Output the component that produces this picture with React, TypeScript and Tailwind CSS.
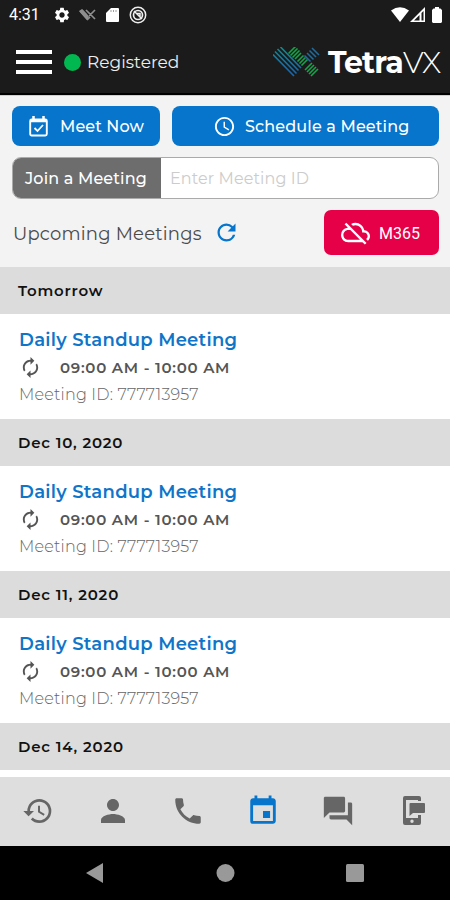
import {
  MdAutorenew,
  MdEvent,
  MdHistory,
  MdOutlineCloudOff,
  MdPerson,
  MdPhone,
  MdQuestionAnswer,
  MdRefresh,
  MdSchedule,
  MdSettings,
} from "react-icons/md";

const MEETING_DAYS = ["Tomorrow", "Dec 10, 2020", "Dec 11, 2020"];

function StatusBar() {
  return (
    <div className="flex h-[29px] items-center pl-[9px] pr-[8px] text-white">
      <span className="w-[44px] font-[Roboto] text-[16px] leading-none">4:31</span>
      <MdSettings className="size-[18px]" />
      <svg className="ml-[8px] h-[13px] w-[18px]" viewBox="0 0 18 13">
        <g fill="none" stroke="#8f8f8f" strokeWidth="1.700">
          <path d="M1 3l7 8M3 2l6 7M8 12l3-3M7 2l9 9M10 8l6-6" />
        </g>
        <path d="M0 3l3-2 5 5 2 3-2 3z" fill="#8f8f8f" />
      </svg>
      <svg className="ml-[9px] h-[16px] w-[13px]" viewBox="0 0 13 16">
        <path d="M5 1h7a1 1 0 0 1 1 1v12a1 1 0 0 1-1 1H1a1 1 0 0 1-1-1V6z" fill="white" />
        <path d="M5 3v2M7.500 3v2M10 3v2" stroke="#777" strokeWidth="0.700" />
      </svg>
      <svg className="ml-[10px] size-[18px]" viewBox="0 0 18 18" fill="none" stroke="#eee">
        <circle cx="9" cy="9" r="7.700" strokeWidth="1.500" />
        <circle cx="9" cy="9" r="4.500" strokeWidth="1.700" />
        <path d="M5 5l8 8M8 7.500h3v3" strokeWidth="1.500" />
      </svg>
      <svg className="ml-auto h-[15px] w-[18px]" viewBox="0 0 18 15">
        <path d="M0 3.500Q9-3 18 3.500L9 15z" fill="white" />
      </svg>
      <svg className="ml-px h-[15px] w-[15px]" viewBox="0 0 15 15">
        <path d="M0 15L15 0v15z" fill="white" />
        <path d="M4 13.500L9.500 8v5.500zM11.500 6l2-2v9.500h-2z" fill="#1b1b1b" />
      </svg>
      <svg className="ml-[7px] h-[16px] w-[10px]" viewBox="0 0 10 16">
        <path d="M3 0h4v1.500h1.500L10 3v12l-1 1H1l-1-1V3l1.500-1.500H3z" fill="white" />
      </svg>
    </div>
  );
}

function Logo() {
  return (
    <svg className="h-[31px] w-[47px]" viewBox="0 0 47 31" fill="none" strokeWidth="1.600">
      <defs>
        <linearGradient id="stripe" x1="16" y1="0" x2="12" y2="26" gradientUnits="userSpaceOnUse">
          <stop stopColor="#168a86" />
          <stop offset="1" stopColor="#1767b5" />
        </linearGradient>
      </defs>
      <path d="M0 7.500l21 21.500M2 4.500l21.500 22M4.500 2l21 21.500M7.500 0l20.500 21" stroke="url(#stripe)" />
      <path
        d="M15.500 6.500l7-7M17.500 8.500l7-7M19.500 10.500l7-7M22 12l6-6M24.500 14.500l6-6M26.500 16.500l6-6M28.500 18.500l6-6M32 23l7-7M34 25l7-7M36 27l7-7M38 29l7-7"
        stroke="#17a34a"
      />
      <path d="M39 1l7 7M36.500 3.500l6.500 6.500M34 6l6.500 6.500M31.500 8.500l6 6" stroke="#1f6b9c" />
    </svg>
  );
}

function Header() {
  return (
    <header className="h-[95px] border-b-2 border-black bg-[#1b1b1b] text-white">
      <StatusBar />
      <div className="flex h-[66px] items-center pl-[16px] pr-[8px]">
        <div className="flex w-[36px] flex-col gap-[6px]">
          <span className="h-[4px] bg-white" />
          <span className="h-[4px] bg-white" />
          <span className="h-[4px] bg-white" />
        </div>
        <span className="ml-[12px] size-[17px] rounded-full bg-[#00b84f]" />
        <span className="ml-[6px] mt-px text-[17px] text-[#eee]">Registered</span>
        <div className="ml-auto flex items-center gap-[8px] whitespace-nowrap">
          <Logo />
          <div className="w-[114px] pt-[2px] text-[30px] leading-none tracking-[-0.85px]">
            <span className="font-bold">Tetra</span>
            <span className="font-light">VX</span>
          </div>
        </div>
      </div>
    </header>
  );
}

function CalendarCheck() {
  return (
    <svg className="h-[21px] w-[19px]" viewBox="0 0 19 21" fill="none" stroke="white">
      <rect x="1.200" y="3.500" width="16.600" height="16" rx="1.500" strokeWidth="1.900" />
      <path d="M1 5h17M4.500 0v4M14.500 0v4" strokeWidth="2.500" />
      <path d="M5.500 12l3 3 5.500-6" strokeWidth="1.800" />
    </svg>
  );
}

function Controls() {
  return (
    <section className="h-[172px] border-t border-[#cfcfcf] bg-[#f3f3f3] pl-[12px] pr-[11px] pt-[10px]">
      <div className="flex h-[40px] gap-[12px] font-medium text-white">
        <button className="flex w-[148px] items-center rounded-[8px] bg-[#0675cb] pl-[17px]">
          <CalendarCheck />
          <span className="ml-[12px] mt-[2px] whitespace-nowrap text-[16px] tracking-[0.1px]">Meet Now</span>
        </button>
        <button className="flex w-[267px] items-center rounded-[8px] bg-[#0675cb] pl-[41px]">
          <MdSchedule className="size-[23px]" />
          <span className="ml-[9px] mt-[2px] whitespace-nowrap text-[16px] tracking-[0.15px]">
            Schedule a Meeting
          </span>
        </button>
      </div>
      <div className="mt-[11px] flex h-[42px] overflow-hidden rounded-[9px] border border-[#aaa] bg-white">
        <span className="flex w-[148px] items-center whitespace-nowrap bg-[#6d6d6d] pl-[12px] pt-[2px] text-[16px] font-medium tracking-[0.15px] text-white">
          Join a Meeting
        </span>
        <span className="flex items-center whitespace-nowrap pl-[9px] pt-[2px] text-[16px] tracking-[0.1px] text-[#ccc]">
          Enter Meeting ID
        </span>
      </div>
      <div className="mt-[11px] flex h-[45px] items-center">
        <span className="w-[201px] whitespace-nowrap pt-[3px] pl-px text-[18px] tracking-[0.2px] text-[#4b4b4b]">
          Upcoming Meetings
        </span>
        <MdRefresh className="size-[27px] text-[#0675cb]" />
        <button className="ml-auto flex h-[45px] w-[115px] items-center rounded-[7px] bg-[#e50048] pl-[17px] text-white">
          <MdOutlineCloudOff className="size-[29px]" />
          <span className="ml-[9px] mt-[2px] font-[Roboto] text-[16px]">M365</span>
        </button>
      </div>
    </section>
  );
}

function DayBand({ day }: { day: string }) {
  return (
    <h2 className="flex h-[47px] items-center bg-[#dcdcdc] pl-[18px] pt-px text-[15px] font-semibold tracking-[0.8px] text-[#111]">
      {day}
    </h2>
  );
}

function MeetingCard() {
  return (
    <article className="h-[105px] whitespace-nowrap bg-white pl-[19px] pt-[12px]">
      <h3 className="h-[28px] text-[18px] font-semibold leading-[28px] tracking-[0.27px] text-[#0f75c9]">
        Daily Standup Meeting
      </h3>
      <div className="flex h-[27px] items-center text-[#555]">
        <MdAutorenew className="size-[23px]" />
        <span className="ml-[18px] mt-px text-[15px] font-semibold tracking-[0.72px]">09:00 AM - 10:00 AM</span>
      </div>
      <p className="text-[16px] font-light leading-[27px] tracking-[0.2px] text-[#666]">Meeting ID: 777713957</p>
    </article>
  );
}

function PhoneMessage() {
  return (
    <svg className="ml-[3px] h-[29px] w-[24px]" viewBox="0 0 24 29" fill="currentColor">
      <path
        fillRule="evenodd"
        d="M3 0h14a2 2 0 0 1 2 2v3h-3V4H4v18h12v-3h3v8a2 2 0 0 1-2 2H3a2 2 0 0 1-2-2V2a2 2 0 0 1 2-2zm7 23.500a1.700 1.700 0 0 0 0 3.400 1.700 1.700 0 0 0 0-3.400z"
      />
      <path d="M8.500 7H22a1 1 0 0 1 1 1v8a1 1 0 0 1-1 1H11l-3.500 3V8a1 1 0 0 1 1-1z" />
    </svg>
  );
}

function BottomNav() {
  return (
    <nav className="grid h-[69px] grid-cols-6 place-items-center bg-[#dedede] pb-[2px] text-[#666]">
      <MdHistory className="size-[32px]" />
      <MdPerson className="size-[36px]" />
      <MdPhone className="size-[34px]" />
      <MdEvent className="size-[34px] text-[#0675cb]" />
      <MdQuestionAnswer className="size-[34px]" />
      <PhoneMessage />
    </nav>
  );
}

function SystemBar() {
  return (
    <svg className="h-[54px] w-[450px] bg-black" viewBox="0 0 450 54" fill="#999">
      <path d="M86 27l17-10v20z" />
      <circle cx="225.500" cy="27" r="9" />
      <rect x="346" y="18" width="18" height="18" rx="1.500" />
    </svg>
  );
}

export default function App() {
  return (
    <div className="flex h-[900px] w-[450px] flex-col overflow-hidden bg-white font-['Montserrat','Inter',sans-serif]">
      <Header />
      <Controls />
      <main className="h-[510px] shrink-0 overflow-hidden">
        {MEETING_DAYS.map((day) => (
          <section key={day}>
            <DayBand day={day} />
            <MeetingCard />
          </section>
        ))}
        <DayBand day="Dec 14, 2020" />
      </main>
      <BottomNav />
      <SystemBar />
    </div>
  );
}
